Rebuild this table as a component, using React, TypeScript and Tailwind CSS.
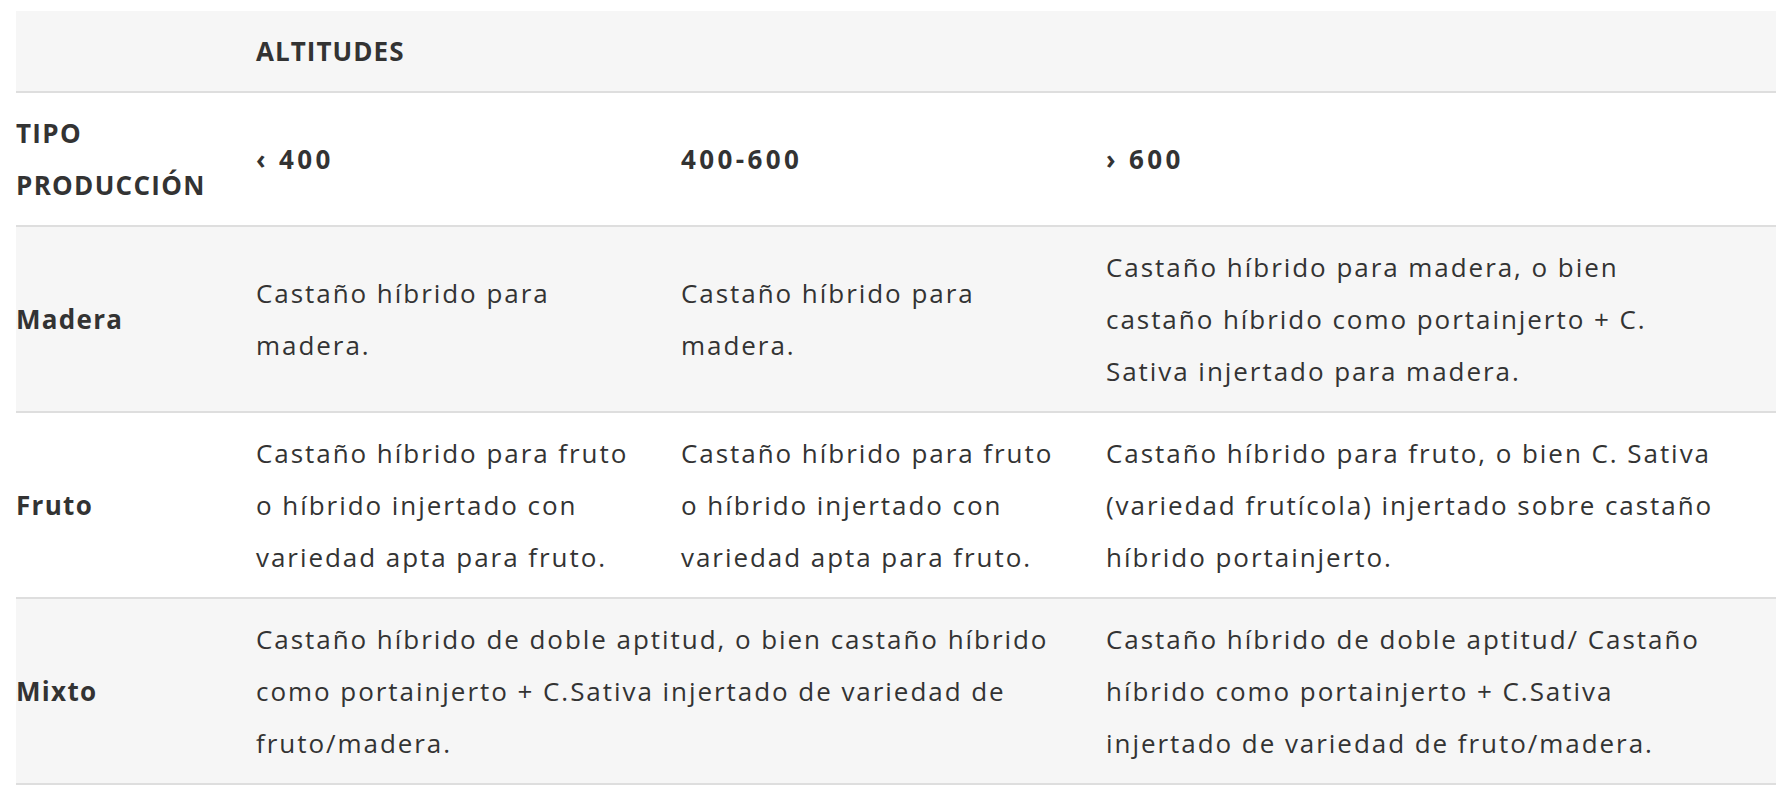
import React from "react";

type Cell = { lines: string[]; bold?: boolean; span?: number; wide?: boolean };

const font = { fontFamily: "'Open Sans', 'Liberation Sans', sans-serif" };

const rows: { bg: string; cells: Cell[] }[] = [
  {
    bg: "bg-white",
    cells: [
      { lines: ["TIPO", "PRODUCCIÓN"], bold: true },
      { lines: ["‹ 400"], bold: true, wide: true },
      { lines: ["400-600"], bold: true, wide: true },
      { lines: ["› 600"], bold: true, wide: true },
    ],
  },
  {
    bg: "bg-[#f6f6f6]",
    cells: [
      { lines: ["Madera"], bold: true },
      { lines: ["Castaño híbrido para", "madera."] },
      { lines: ["Castaño híbrido para", "madera."] },
      {
        lines: [
          "Castaño híbrido para madera, o bien",
          "castaño híbrido como portainjerto + C.",
          "Sativa injertado para madera.",
        ],
      },
    ],
  },
  {
    bg: "bg-white",
    cells: [
      { lines: ["Fruto"], bold: true },
      { lines: ["Castaño híbrido para fruto", "o híbrido injertado con", "variedad apta para fruto."] },
      { lines: ["Castaño híbrido para fruto", "o híbrido injertado con", "variedad apta para fruto."] },
      {
        lines: [
          "Castaño híbrido para fruto, o bien C. Sativa",
          "(variedad frutícola) injertado sobre castaño",
          "híbrido portainjerto.",
        ],
      },
    ],
  },
  {
    bg: "bg-[#f6f6f6]",
    cells: [
      { lines: ["Mixto"], bold: true },
      {
        span: 2,
        lines: [
          "Castaño híbrido de doble aptitud, o bien castaño híbrido",
          "como portainjerto + C.Sativa injertado de variedad de",
          "fruto/madera.",
        ],
      },
      {
        lines: [
          "Castaño híbrido de doble aptitud/ Castaño",
          "híbrido como portainjerto + C.Sativa",
          "injertado de variedad de fruto/madera.",
        ],
      },
    ],
  },
];

const textClass = (cell: Cell) => {
  if (cell.wide) return "font-bold tracking-[0.13em]";
  if (cell.bold) return "font-bold tracking-[0.05em]";
  return "font-normal tracking-[0.075em]";
};

const TableCell = ({ cell }: { cell: Cell }) => (
  <div className={cell.span === 2 ? "col-span-2 pr-8" : "pr-8"}>
    {cell.lines.map((line, i) => (
      <span key={i} className={"block whitespace-nowrap " + textClass(cell)}>
        {line}
      </span>
    ))}
  </div>
);

export default function App() {
  return (
    <div className="w-[1776px] h-[794px] bg-white pt-[11px] pl-[16px]" style={font}>
      <div className="text-[26px] leading-[52px] text-[#333333]">
        {/* cabecera */}
        <div className="grid grid-cols-[240px_425px_425px_1fr] items-center bg-[#f6f6f6] py-[14px] border-b-2 border-[#dedede]">
          <div />
          <div className="col-span-3 font-bold tracking-[0.04em]">ALTITUDES</div>
        </div>

        {rows.map((row, r) => (
          <div
            key={r}
            className={
              "grid grid-cols-[240px_425px_425px_1fr] items-center py-[14px] border-b-2 border-[#dedede] " + row.bg
            }
          >
            {row.cells.map((cell, c) => (
              <TableCell key={c} cell={cell} />
            ))}
          </div>
        ))}
      </div>
    </div>
  );
}
